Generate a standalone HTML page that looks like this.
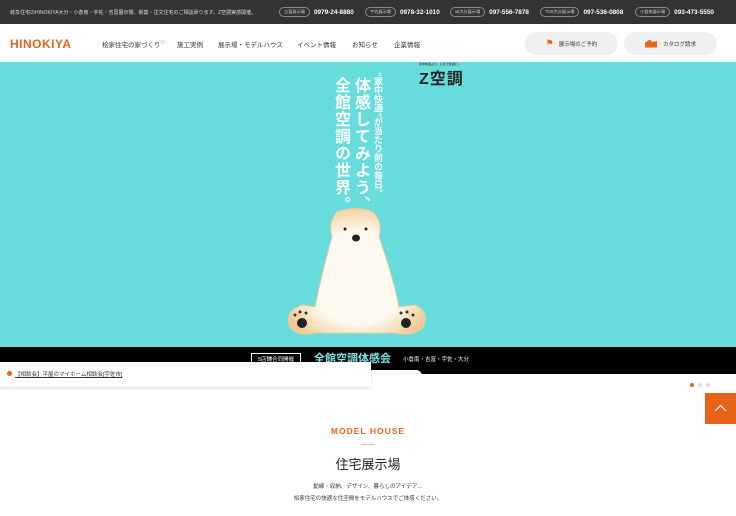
<!DOCTYPE html>
<html><head><meta charset="utf-8"><style>
*{margin:0;padding:0;box-sizing:border-box}
body{width:736px;height:516px;overflow:hidden;background:#fff;font-family:"Liberation Sans","Noto Sans CJK JP",sans-serif;position:relative}
.top{position:absolute;left:0;top:0;width:736px;height:24px;background:#333;color:#ddd;font-size:5px}
.top .msg{position:absolute;left:10px;top:9px}
.tel{position:absolute;top:6px;height:12px;display:flex;align-items:center}
.tel span.b{border:1px solid #888;border-radius:6px;font-size:4.2px;padding:1px 4px;color:#ccc;margin-right:4px}
.tel b{font-size:6.4px;color:#fff;font-weight:bold}
.nav{position:absolute;top:24px;left:0;width:736px;height:38px;background:#fff}
.logo{position:absolute;left:10px;top:13px;color:#e8631a;font-size:12px;font-weight:bold;letter-spacing:0.5px}
.menu{position:absolute;top:15px;font-size:6.5px;color:#333}
.btn{position:absolute;top:8px;height:23px;background:#f0f0f0;border-radius:12px;font-size:5.5px;color:#333;display:flex;align-items:center;justify-content:center}
.hero{position:absolute;top:62px;left:0;width:736px;height:286px;background:#66dcdc}
.vt{position:absolute;writing-mode:vertical-rl;color:#fff;font-weight:bold}
.band{position:absolute;top:347px;left:0;width:736px;height:27px;background:#000}
.news{position:absolute;left:0;top:362px;width:371px;height:25px;background:#fff;box-shadow:0 1px 3px rgba(0,0,0,.15);font-size:5.5px;color:#333}
</style></head><body>
<div class="top"><div class="msg">岐阜住宅のHINOKIYA大分・小倉南・宇佐・吉富展示場。新築・注文住宅のご相談承ります。Z空調実感開催。</div>
<div class="tel" style="left:279px"><span class="b">吉富展示場</span><b>0979-24-8880</b></div>
<div class="tel" style="left:365px"><span class="b">宇佐展示場</span><b>0978-32-1010</b></div>
<div class="tel" style="left:450px"><span class="b">ial大分展示場</span><b>097-556-7878</b></div>
<div class="tel" style="left:540px"><span class="b">TOS大分展示場</span><b>097-536-0808</b></div>
<div class="tel" style="left:635px"><span class="b">小倉南展示場</span><b>093-473-5550</b></div>
</div>
<div class="nav">
<div class="logo">HINOKIYA</div>
<div class="menu" style="left:102px">桧家住宅の家づくり<sup style="font-size:4px">♡</sup></div>
<div class="menu" style="left:177px">施工実例</div>
<div class="menu" style="left:218px">展示場・モデルハウス</div>
<div class="menu" style="left:297px">イベント情報</div>
<div class="menu" style="left:352px">お知らせ</div>
<div class="menu" style="left:394px">企業情報</div>
<div class="btn" style="left:525px;width:93px"><span style="color:#e8631a;font-size:9px;margin-right:5px">⚑</span>展示場のご予約</div>
<div class="btn" style="left:624px;width:93px"><span style="display:inline-block;width:12px;height:8px;background:#e8631a;margin-right:6px;clip-path:polygon(0 40%,40% 0,60% 30%,100% 20%,100% 100%,0 100%)"></span>カタログ請求</div>
</div>
<div class="hero">
<div style="position:absolute;left:419px;top:0;font-size:3px;color:#222">家中快適より、心まで快適に。</div>
<div style="position:absolute;left:419px;top:3px;font-size:16px;font-weight:bold;color:#222;letter-spacing:1px">Z空調</div>
<div class="vt" style="left:372px;top:10px;font-size:9px">“家中快適”が当たり前の毎日。</div>
<div class="vt" style="left:348px;top:15px;font-size:16px;letter-spacing:1px">体感してみよう、</div>
<div class="vt" style="left:328px;top:15px;font-size:16px;letter-spacing:1px">全館空調の世界。</div>
<svg style="position:absolute;left:285px;top:145px" width="145" height="130" viewBox="0 0 145 130">
<defs><radialGradient id="g" cx="50%" cy="55%" r="60%"><stop offset="0.6" stop-color="#fffaf0"/><stop offset="1" stop-color="#f0c890"/></radialGradient></defs>
<path d="M52 5 Q70 -2 88 5 Q98 15 94 30 Q108 70 114 100 L130 98 Q145 105 138 120 Q130 130 110 126 L30 126 Q10 130 4 118 Q0 103 18 98 L30 100 Q36 70 47 30 Q43 15 52 5Z" fill="url(#g)" stroke="#eecb9a" stroke-width="1"/>
<circle cx="60" cy="22" r="1.5" fill="#222"/><circle cx="81" cy="22" r="1.5" fill="#222"/>
<ellipse cx="71" cy="31" rx="4" ry="3.5" fill="#222"/>
<circle cx="17" cy="116" r="5" fill="#222"/><circle cx="121" cy="116" r="5" fill="#222"/>
<circle cx="10" cy="108" r="1.5" fill="#333"/><circle cx="15" cy="105" r="1.5" fill="#333"/><circle cx="21" cy="106" r="1.5" fill="#333"/>
<circle cx="116" cy="106" r="1.5" fill="#333"/><circle cx="122" cy="105" r="1.5" fill="#333"/><circle cx="128" cy="108" r="1.5" fill="#333"/>
</svg>
</div>
<div class="band">
<div style="position:absolute;left:251px;top:6px;border:1px solid #fff;color:#fff;font-size:5.5px;padding:1px 6px">5店舗合同開催</div>
<div style="position:absolute;left:314px;top:3px;color:#7fe3e3;font-size:11px;font-weight:bold">全館空調体感会</div>
<div style="position:absolute;left:403px;top:8px;color:#fff;font-size:5.5px">小倉南・吉富・宇佐・大分</div>
</div>
<div style="position:absolute;left:370px;top:370px;width:52px;height:10px;background:#fff;border-radius:0 6px 0 0"></div>
<div class="news"><span style="position:absolute;left:7px;top:9px;width:5px;height:5px;border-radius:50%;background:#e8631a"></span><span style="position:absolute;left:15px;top:8px;text-decoration:underline">【相談会】平屋のマイホーム相談会[宇佐市]</span></div>
<div style="position:absolute;left:690px;top:383px;width:4px;height:4px;border-radius:50%;background:#e8631a"></div>
<div style="position:absolute;left:698px;top:383px;width:4px;height:4px;border-radius:50%;background:#ddd"></div>
<div style="position:absolute;left:706px;top:383px;width:4px;height:4px;border-radius:50%;background:#ddd"></div>
<div style="position:absolute;left:705px;top:393px;width:31px;height:31px;background:#e8631a"><svg width="31" height="31"><path d="M10 18 L15.5 12.5 L21 18" stroke="#fff" stroke-width="1.2" fill="none"/></svg></div>
<div style="position:absolute;left:0;top:426px;width:736px;text-align:center;color:#e8631a;font-size:8.5px;font-weight:bold;letter-spacing:1px">MODEL HOUSE</div>
<div style="position:absolute;left:361px;top:444px;width:14px;height:1px;background:#f0b890"></div>
<div style="position:absolute;left:0;top:454px;width:736px;text-align:center;color:#222;font-size:13px">住宅展示場</div>
<div style="position:absolute;left:0;top:482px;width:736px;text-align:center;color:#333;font-size:5.5px">動線・収納、デザイン、暮らしのアイデア…</div>
<div style="position:absolute;left:0;top:494px;width:736px;text-align:center;color:#333;font-size:5.5px">桧家住宅の快適な住空間をモデルハウスでご体感ください。</div>
</body></html>
